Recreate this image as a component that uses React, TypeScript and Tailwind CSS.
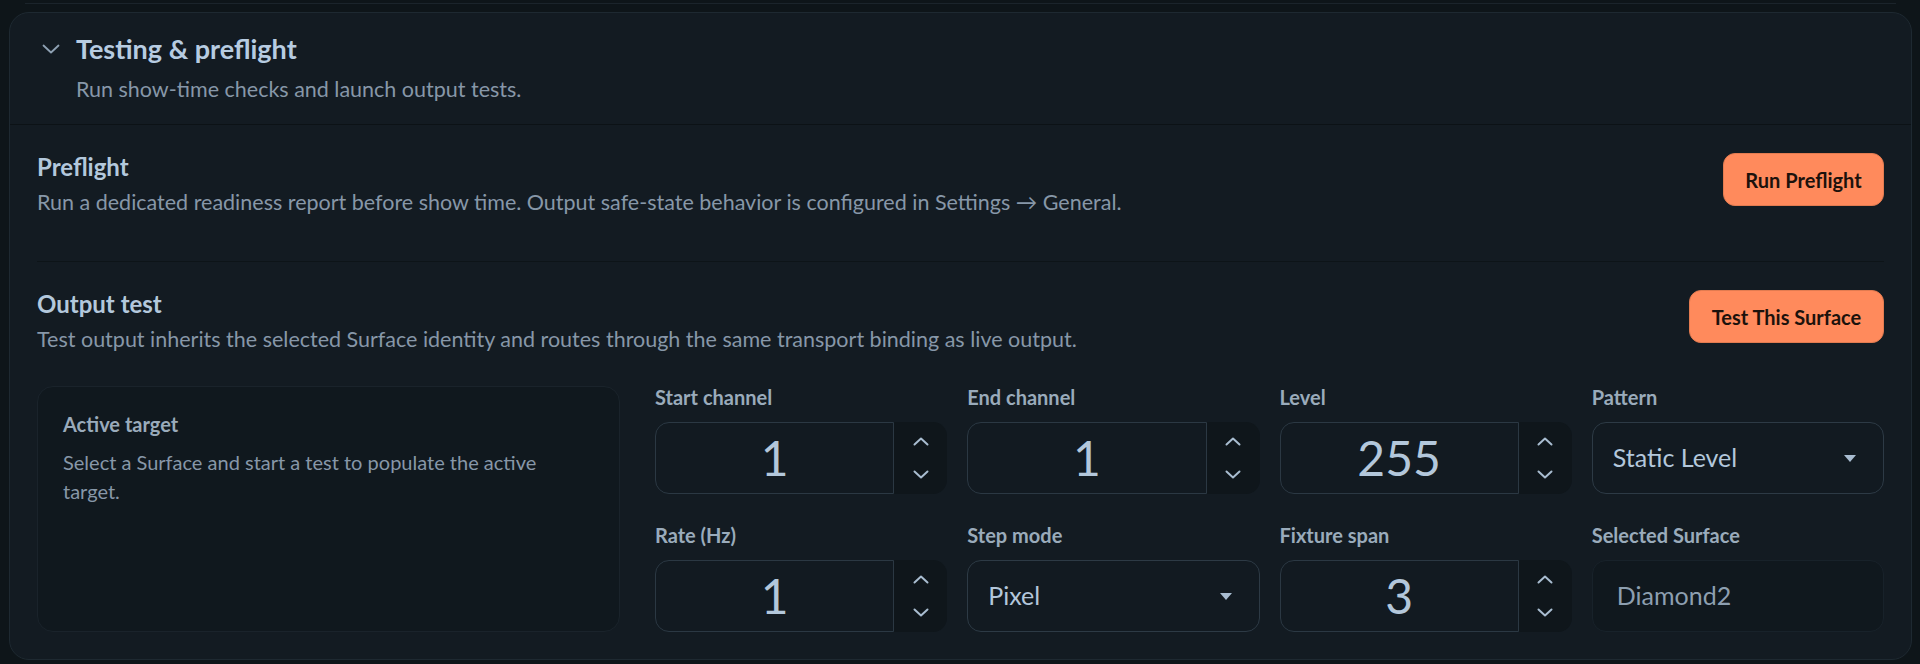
import React from "react";

const HeaderChevron = () => (
  <svg width="18" height="10" viewBox="0 0 18 10" fill="none">
    <polyline points="1.5,1.5 9,8.5 16.5,1.5" stroke="#8ea1b3" strokeWidth="1.8" strokeLinecap="round" strokeLinejoin="round" />
  </svg>
);

const StepUp = () => (
  <svg width="16" height="9" viewBox="0 0 16 9" fill="none">
    <polyline points="1.5,7.5 8,1.5 14.5,7.5" stroke="#a9bdd1" strokeWidth="2" strokeLinecap="round" strokeLinejoin="round" />
  </svg>
);

const StepDown = () => (
  <svg width="16" height="9" viewBox="0 0 16 9" fill="none">
    <polyline points="1.5,1.5 8,7.5 14.5,1.5" stroke="#a9bdd1" strokeWidth="2" strokeLinecap="round" strokeLinejoin="round" />
  </svg>
);

const Caret = () => (
  <svg width="12" height="7" viewBox="0 0 12 7">
    <polygon points="0,0 12,0 6,7" fill="#a9bdd1" />
  </svg>
);

const Label = ({ children }: { children: React.ReactNode }) => (
  <div className="mb-[14px] text-[20px] leading-[22px] font-bold text-[#9aabbb]">{children}</div>
);

function NumberField({ label, value }: { label: string; value: string }) {
  return (
    <div>
      <Label>{label}</Label>
      <div className="flex h-[72px]">
        <div className="flex flex-1 items-center justify-center rounded-l-[14px] border border-[#2b3843] bg-[#121a21] text-[48px] font-normal text-[#b3c7db]">
          {value}
        </div>
        <div className="flex w-[53px] flex-col items-center justify-between rounded-r-[14px] bg-[#0f161b] py-[15px]">
          <StepUp />
          <StepDown />
        </div>
      </div>
    </div>
  );
}

function SelectField({ label, value }: { label: string; value: string }) {
  return (
    <div>
      <Label>{label}</Label>
      <div className="flex h-[72px] items-center justify-between rounded-[14px] border border-[#2d3a45] bg-[#121a21] pl-[20px] pr-[27px] text-[25px] text-[#b3c7db]">
        <span>{value}</span>
        <Caret />
      </div>
    </div>
  );
}

function StaticField({ label, value }: { label: string; value: string }) {
  return (
    <div>
      <Label>{label}</Label>
      <div className="flex h-[72px] items-center rounded-[14px] border border-[#18222a] bg-[#10181e] pl-[24px] text-[25px] text-[#8d9fb0]">
        {value}
      </div>
    </div>
  );
}

const OrangeButton = ({ children, width }: { children: React.ReactNode; width: string }) => (
  <button className={`flex h-[53px] items-center justify-center rounded-[12px] border border-[#e27b50] bg-[#ff8a5c] text-[20px] font-bold text-[#1c120c] ${width}`}>
    {children}
  </button>
);

export default function App() {
  return (
    <div className="min-h-[664px] bg-[#0e1519] pl-[9px] pr-[8px] font-['Lato',sans-serif]">
      <div className="mx-[16px] h-[4px] border-b border-[#1b242b]" />

      <section className="mt-[8px] rounded-[20px] border border-[#1e2931] bg-[#131b22]">
        <header className="flex items-start gap-[16px] border-b border-[#0c1216] pb-[21px] pl-[32px] pr-8 pt-[19px]">
          <div className="flex h-[34px] items-center">
            <HeaderChevron />
          </div>
          <div>
            <h2 className="text-[27px] leading-[34px] font-bold text-[#b7cce1]">Testing &amp; preflight</h2>
            <p className="mt-[9px] text-[21.5px] leading-[28px] text-[#8797a8]">
              Run show-time checks and launch output tests.
            </p>
          </div>
        </header>

        <div className="px-[27px] pb-[27px]">
          <div className="flex items-start justify-between border-b border-[#0d1418] pb-[45px] pt-[28px]">
            <div>
              <h3 className="text-[24px] leading-[28px] font-bold text-[#b3c8dc]">Preflight</h3>
              <p className="mt-[7px] text-[21.5px] leading-[28px] text-[#8797a8]">
                Run a dedicated readiness report before show time. Output safe-state behavior is configured in Settings → General.
              </p>
            </div>
            <OrangeButton width="w-[161px]">Run Preflight</OrangeButton>
          </div>

          <div className="pt-[28px]">
            <div className="flex items-start justify-between">
              <div>
                <h3 className="text-[24px] leading-[28px] font-bold text-[#b3c8dc]">Output test</h3>
                <p className="mt-[7px] text-[21.5px] leading-[28px] text-[#8797a8]">
                  Test output inherits the selected Surface identity and routes through the same transport binding as live output.
                </p>
              </div>
              <OrangeButton width="w-[195px]">Test This Surface</OrangeButton>
            </div>

            <div className="mt-[33px] grid grid-cols-[583px_1fr] gap-[35px]">
              <div className="rounded-[16px] border border-[#1a232b] bg-[#10181e] pl-[25px] pr-[40px] pt-[26px]">
                <div className="text-[20px] leading-[22px] font-bold text-[#9aabbb]">Active target</div>
                <p className="mt-[13px] text-[20px] leading-[29px] text-[#8797a8]">
                  Select a Surface and start a test to populate the active target.
                </p>
              </div>

              <div className="grid grid-cols-4 gap-x-[20px] gap-y-[30px]">
                <NumberField label="Start channel" value="1" />
                <NumberField label="End channel" value="1" />
                <NumberField label="Level" value="255" />
                <SelectField label="Pattern" value="Static Level" />
                <NumberField label="Rate (Hz)" value="1" />
                <SelectField label="Step mode" value="Pixel" />
                <NumberField label="Fixture span" value="3" />
                <StaticField label="Selected Surface" value="Diamond2" />
              </div>
            </div>
          </div>
        </div>
      </section>
    </div>
  );
}
